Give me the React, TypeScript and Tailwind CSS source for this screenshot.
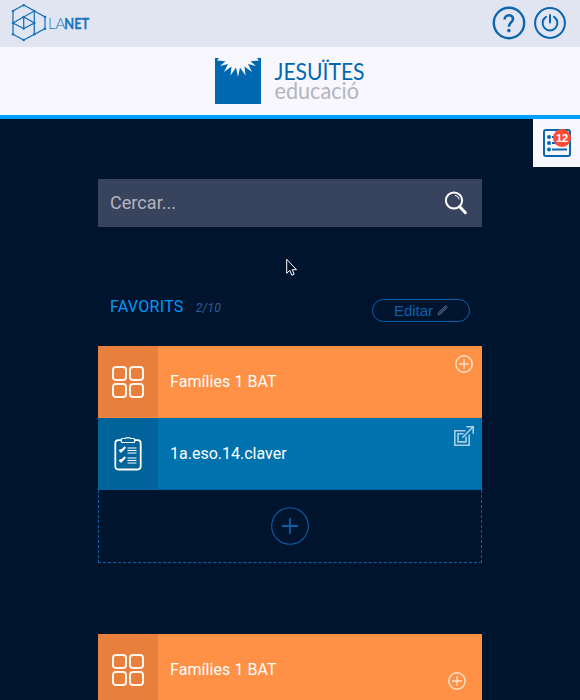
import React from "react";

function LanetLogo() {
  return (
    <svg width="90" height="40" viewBox="0 0 90 40" fill="none" stroke="#1b75bc" strokeWidth="1.3">
      <path d="M14.700 2 L4 8 V20 L14.700 25.500 L25.300 20 V8 Z" />
      <path d="M25.300 8 L36 14 V25.700 L25.300 31.300 L14.700 37 L4 31.300 V20 L14.700 14 L25.300 20 V31.300 M14.700 14 V25.500 M14.700 14 L25.300 8" />
      <g fill="#1b75bc" stroke="none">
        <circle cx="14.700" cy="2.300" r="1.300" /><circle cx="4" cy="8" r="1.300" />
        <circle cx="25.300" cy="8" r="1.300" /><circle cx="36" cy="14" r="1.300" />
        <circle cx="14.700" cy="14" r="1.300" /><circle cx="14.700" cy="25.500" r="1.300" />
        <circle cx="4" cy="20" r="1.300" /><circle cx="25.300" cy="20" r="1.300" />
        <circle cx="36" cy="25.700" r="1.300" /><circle cx="4" cy="31.300" r="1.300" />
        <circle cx="14.700" cy="37" r="1.300" /><circle cx="25.300" cy="31.300" r="1.300" />
        <text x="39" y="26" textLength="17.500" lengthAdjust="spacingAndGlyphs" className="font-['Lato',sans-serif] text-[16px] font-light">LA</text>
        <text x="55.300" y="26" textLength="25" lengthAdjust="spacingAndGlyphs" stroke="#1b75bc" strokeWidth=".3" className="font-['Lato',sans-serif] text-[16px] font-bold">NET</text>
      </g>
    </svg>
  );
}

function HelpIcon() {
  return (
    <svg width="34" height="34" viewBox="0 0 34 34" fill="none" stroke="#0b66ad">
      <circle cx="17" cy="17" r="15.200" strokeWidth="2.400" />
      <path d="M12.600 13.500 C12.600 8 21.200 8 21 13 C20.900 16.400 16.900 16.500 16.900 20.700" strokeWidth="2.600" />
      <circle cx="16.900" cy="24.600" r="1.800" fill="#0b66ad" stroke="none" />
    </svg>
  );
}

function PowerIcon() {
  return (
    <svg width="32" height="32" viewBox="0 0 32 32" fill="none" stroke="#0b66ad" strokeLinecap="round">
      <circle cx="16" cy="16" r="14.900" strokeWidth="2" />
      <path d="M16 8 V15.500" strokeWidth="2" />
      <path d="M12 9.800 A7.400 7.400 0 1 0 20 9.800" strokeWidth="2" />
    </svg>
  );
}

function BrandLogo() {
  return (
    <svg width="150" height="50" viewBox="0 0 150 50" className="overflow-visible">
      <rect width="46" height="46" fill="#0068b1" />
      <path fill="#f7f7fd" d="M4 0 L2 2.500 L10.500 3.300 L5 8 L13 6 L9 14 L16.500 8.500 L15.500 17.500 L21 9.500 L23 19 L25 9.500 L30.500 17.500 L29.500 8.500 L37 14 L33 6 L41 8 L35.500 3.300 L44 2.500 L42 0 Z" />
      <text x="59.500" y="21.500" textLength="90" lengthAdjust="spacingAndGlyphs" fill="#0068b1" className="font-['Lato',sans-serif] text-[22.500px]">JESUÏTES</text>
      <text x="59.500" y="41" textLength="84.500" lengthAdjust="spacingAndGlyphs" fill="#b3b6bc" className="font-['Lato',sans-serif] text-[23px]">educació</text>
    </svg>
  );
}

function ListIcon() {
  return (
    <svg width="28" height="28" viewBox="0 0 28 28" fill="none" stroke="#0b66ad">
      <rect x="1" y="1" width="26" height="26" rx="2" strokeWidth="2" />
      <path d="M9 8 H24 M9 14 H24 M9 20.500 H24" strokeWidth="2" />
      <g fill="#0b66ad" stroke="none">
        <circle cx="6" cy="8" r="2" /><circle cx="6" cy="14" r="2" /><circle cx="6" cy="20.500" r="2" />
      </g>
    </svg>
  );
}

function SearchIcon() {
  return (
    <svg width="24" height="24" viewBox="0 0 24 24" fill="none" stroke="#fff">
      <circle cx="10" cy="9.500" r="8.100" strokeWidth="2" />
      <path d="M11 4.300 Q14.500 4.700 15.200 8.500" strokeWidth="1" />
      <path d="M15.500 15.500 L21.400 21.700" strokeWidth="3" strokeLinecap="round" />
    </svg>
  );
}

function GridIcon() {
  return (
    <svg width="32" height="32" viewBox="0 0 32 32" fill="none" stroke="#fff5ec" strokeWidth="2">
      <rect x="1" y="1" width="13" height="13" rx="3" />
      <rect x="18" y="1" width="13" height="13" rx="3" />
      <rect x="1" y="18" width="13" height="13" rx="3" />
      <rect x="18" y="18" width="13" height="13" rx="3" />
    </svg>
  );
}

function ClipboardIcon() {
  return (
    <svg width="28" height="34" viewBox="0 0 28 34" fill="none" stroke="#fff">
      <path d="M7 3.200 H4.500 Q1.300 3.200 1.300 6.500 V29 Q1.300 32.500 4.500 32.500 H23.500 Q26.700 32.500 26.700 29 V6.500 Q26.700 3.200 23.500 3.200 H21" strokeWidth="1.800" />
      <path d="M7.300 2.200 Q7.300 1.500 8.500 1.500 H11 Q12 .6 14 .6 Q16 .6 17 1.500 H19.500 Q20.700 1.500 20.700 2.500 V4.500 Q20.700 5.500 19.700 5.500 H8.300 Q7.300 5.500 7.300 4.500 Z" strokeWidth="1.200" />
      <path d="M5.500 12.700 L7 14.300 L11.300 10 M5.500 22.700 L7 24.300 L11.300 20" strokeWidth="2.200" />
      <path d="M13.500 11 H22.500 M13.500 13.500 H22.500 M13.500 16 H22.500 M13.500 21 H22.500 M13.500 23.500 H22.500 M13.500 26 H22.500" strokeWidth="1.200" />
    </svg>
  );
}

function AddIcon() {
  return (
    <svg width="18" height="18" viewBox="0 0 18 18" fill="none" stroke="#ffdfc5" strokeWidth="1.500">
      <circle cx="9" cy="9" r="8.200" />
      <path d="M9 4 V14 M4 9 H14" />
    </svg>
  );
}

function ExternalIcon() {
  return (
    <svg width="20" height="20" viewBox="0 0 20 20" fill="none" stroke="#a9cde5" strokeWidth="1.600">
      <path d="M11.500 4.700 H.8 V19.200 H15.200 V8.500" />
      <path d="M9.500 7.800 H4 V15.900 H12 V10.600" />
      <path d="M8.300 11.800 L18.700 1.200 M12.200 .8 H19.200 V7.800" />
    </svg>
  );
}

function PencilIcon() {
  return (
    <svg width="11" height="11" viewBox="0 0 11 11" fill="none" stroke="#46607f">
      <path d="M1 10 L1.700 7.300 L8 1.200 Q9 .5 9.700 1.300 Q10.500 2 9.700 3 L3.500 9.200 Z" strokeWidth="1" fill="#1d3553" />
      <path d="M3 7.900 L8.800 2.200" strokeWidth=".8" />
    </svg>
  );
}

function Cursor() {
  return (
    <svg className="absolute left-[286px] top-[258px]" width="12" height="19" viewBox="0 0 12 19" fill="#00142e" stroke="#fff">
      <path d="M.7 1.300 V15.300 L3.800 12.300 L5.800 17.200 L8.200 16.200 L6.300 11.700 H10.500 Z" />
    </svg>
  );
}

type CardProps = { label: string; tone: "orange" | "blue"; low?: boolean };

function Card({ label, tone, low = false }: CardProps) {
  const orange = tone === "orange";
  return (
    <div className={`flex h-[72px] w-full shrink-0 border-b ${orange ? "border-[#ef873f] bg-[#ff9147]" : "border-[#0065a5] bg-[#0072ae]"}`}>
      <div className={`flex w-[60px] items-center justify-center ${orange ? "bg-[#e97f3c]" : "bg-[#00639a]"}`}>
        {orange ? <GridIcon /> : <ClipboardIcon />}
      </div>
      <div className={`flex-1 self-center pl-3 text-base leading-6 text-white ${orange ? "tracking-[0.07px]" : ""}`}>{label}</div>
      <div className={low ? "pr-4 pt-[38px]" : orange ? "pr-[9px] pt-[9px]" : "pr-2 pt-2"}>
        {orange ? <AddIcon /> : <ExternalIcon />}
      </div>
    </div>
  );
}

export default function App() {
  return (
    <div className="relative flex h-[700px] w-[580px] flex-col overflow-hidden bg-[#00142e] font-['Roboto',sans-serif]">
      <header className="flex h-[47px] shrink-0 items-start justify-between bg-[#e1e5f2] pl-[9px] pr-[14px]">
        <div className="pt-[3px]"><LanetLogo /></div>
        <div className="flex items-center gap-2 pt-[6px]">
          <HelpIcon />
          <PowerIcon />
        </div>
      </header>
      <div className="flex h-[72px] shrink-0 justify-center border-b-4 border-[#009fff] bg-[#f7f7fd] pt-[11px]">
        <BrandLogo />
      </div>
      <button className="relative flex h-12 w-[47px] shrink-0 items-center self-end bg-[#f7f7fd] pl-[10px]">
        <ListIcon />
        <span className="absolute left-5 top-[10px] flex size-[18px] items-center justify-center rounded-full bg-[#ff4b32] font-['Liberation_Sans',sans-serif] text-[11px] font-bold leading-none text-white">12</span>
      </button>
      <main className="flex flex-col px-[98px] pt-3">
        <div className="flex h-12 items-center justify-between bg-[#38435d] pl-3 pr-[14px]">
          <span className="text-lg tracking-[0.05px] text-[#b4b5bc]">Cercar...</span>
          <SearchIcon />
        </div>
        <div className="mt-[68px] flex h-6 items-center px-3">
          <h2 className="text-base leading-4 tracking-[0.3px] text-[#0099fa]">FAVORITS</h2>
          <span className="ml-3 pt-[2px] text-xs italic tracking-[0.25px] text-[#2a609b]">2/10</span>
          <button className="ml-auto mt-[6px] flex h-[23px] w-[98px] items-center justify-center gap-[4px] rounded-full border border-[#0862ad] font-['Liberation_Sans',sans-serif] text-[15px] leading-none text-[#0862ad]">
            Editar
            <PencilIcon />
          </button>
        </div>
        <div className="mt-[27px]">
          <Card label="Famílies 1 BAT" tone="orange" />
          <Card label="1a.eso.14.claver" tone="blue" />
          <div className="flex h-[73px] items-center justify-center border border-t-0 border-dashed border-[#0963ac]">
            <svg width="38" height="38" viewBox="0 0 38 38" fill="none" stroke="#0b60a8">
              <circle cx="19" cy="19" r="18.300" strokeWidth="1.100" />
              <path d="M19 11 V27 M11 19 H27" strokeWidth="1.800" />
            </svg>
          </div>
        </div>
        <div className="mt-[71px]">
          <Card label="Famílies 1 BAT" tone="orange" low />
        </div>
      </main>
      <Cursor />
    </div>
  );
}
